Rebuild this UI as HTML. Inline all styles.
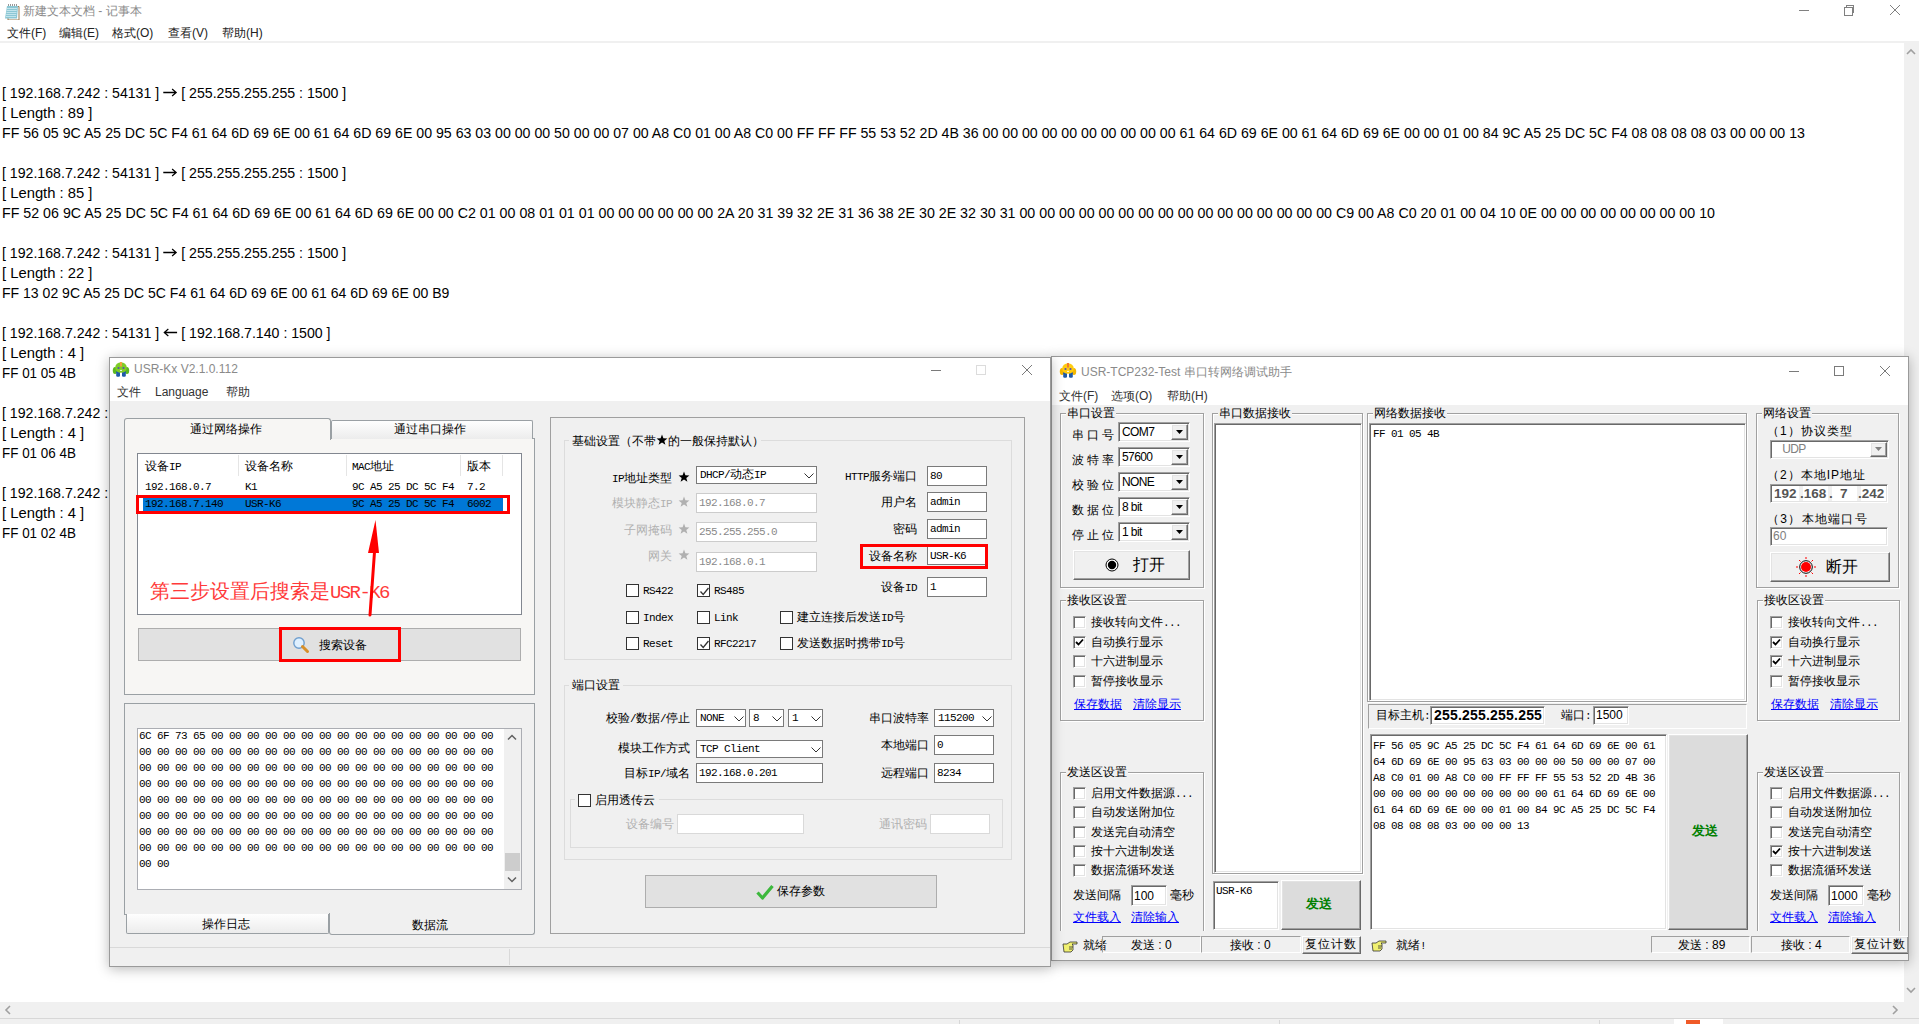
<!DOCTYPE html><html><head><meta charset="utf-8"><style>
*{margin:0;padding:0;box-sizing:border-box}
html,body{width:1919px;height:1024px;overflow:hidden;background:#fff}
body{position:relative;font-family:"Liberation Sans",sans-serif;color:#000}
div{position:absolute}
.t{white-space:pre;font-size:12px;line-height:14px}
.s{white-space:pre;font-family:"Liberation Mono",monospace;font-size:12px;line-height:14px}
.a{font-size:11px;letter-spacing:-0.6px}
.star{display:inline-block;vertical-align:-1px}
.arr{display:inline-block;vertical-align:1px}
.np{white-space:pre;font-size:15px;line-height:20px;left:3px}

.kxb{background:#fff;border:1px solid #7a7a7a}
.tb{border:1px solid #7a7a7a;background:#fff}
.tbd{border:1px solid #cccccc;background:#fff}
.cb{width:13px;height:13px;border:1px solid #333;background:#fff}
.gb{border:1px solid #dcdcdc}
.gray{color:#a0a0a0}

.sunk{background:#fff;border:1px solid;border-color:#a0a0a0 #fff #fff #a0a0a0;box-shadow:inset 1px 1px 0 #696969,inset -1px -1px 0 #e3e3e3}
.raise{background:#f0f0f0;border:1px solid;border-color:#fff #696969 #696969 #fff;box-shadow:inset -1px -1px 0 #a0a0a0,inset 1px 1px 0 #e3e3e3}
.etch{border:1px solid #a0a0a0;box-shadow:inset 1px 1px 0 #fff,1px 1px 0 #fff}
.thin{border:1px solid;border-color:#a0a0a0 #fff #fff #a0a0a0}
.lnk{color:#0000ff;text-decoration:underline}
</style></head><body><div style="left:0;top:0;width:1919px;height:1024px;background:#fff"></div>
<svg style="position:absolute;left:2px;top:2px" width="18" height="18" viewBox="0 0 18 18"><path d="M6 4.5H17V18H6Z" fill="#fff" stroke="#9a7a50" stroke-width="1"/><path d="M5 4L16 4L15 16.5L3 16.5Z" fill="#8cc7d4"/><path d="M5 6.5h10M4.7 8.5h10M4.5 10.5h10M4.2 12.5h10M4 14.5h10" stroke="#c8e8ee" stroke-width="0.9"/><path d="M6 3h9" stroke="#333" stroke-width="1.2" stroke-dasharray="1 1"/></svg>
<div class="t" style="left:23px;top:4px;color:#8a8a8a;font-size:12px">新建文本文档 - 记事本</div>
<div style="left:1799px;top:10px;width:10px;height:1px;background:#808080"></div>
<div style="left:1846px;top:5px;width:8px;height:8px;border:1px solid #808080"></div>
<div style="left:1844px;top:7px;width:9px;height:9px;border:1px solid #808080;background:#fff"></div>
<svg style="position:absolute;left:1889px;top:4px" width="12" height="12"><path d="M1 1L11 11M11 1L1 11" stroke="#808080" stroke-width="1"/></svg>
<div class="t" style="left:7px;top:26px;color:#222;font-size:12px">文件(F)</div>
<div class="t" style="left:59px;top:26px;color:#222;font-size:12px">编辑(E)</div>
<div class="t" style="left:112px;top:26px;color:#222;font-size:12px">格式(O)</div>
<div class="t" style="left:168px;top:26px;color:#222;font-size:12px">查看(V)</div>
<div class="t" style="left:222px;top:26px;color:#222;font-size:12px">帮助(H)</div>
<div style="left:0px;top:41px;width:1919px;height:2px;background:#f0f0f0"></div>
<div class="np" style="top:83px;left:2px;transform:scaleX(0.9424);transform-origin:0 0">[ 192.168.7.242 : 54131 ] <svg class="arr" width="15" height="9" viewBox="0 0 15 9"><path d="M0 4.5H13.5M9.5 1L13.8 4.5L9.5 8" stroke="#000" stroke-width="1.3" fill="none"/></svg> [ 255.255.255.255 : 1500 ]</div>
<div class="np" style="top:103px;left:2px;transform:scaleX(0.986);transform-origin:0 0">[ Length : 89 ]</div>
<div class="np" style="top:123px;left:2px;transform:scaleX(0.9445);transform-origin:0 0">FF 56 05 9C A5 25 DC 5C F4 61 64 6D 69 6E 00 61 64 6D 69 6E 00 95 63 03 00 00 00 50 00 00 07 00 A8 C0 01 00 A8 C0 00 FF FF FF 55 53 52 2D 4B 36 00 00 00 00 00 00 00 00 00 00 61 64 6D 69 6E 00 61 64 6D 69 6E 00 00 01 00 84 9C A5 25 DC 5C F4 08 08 08 08 03 00 00 00 13</div>
<div class="np" style="top:163px;left:2px;transform:scaleX(0.9424);transform-origin:0 0">[ 192.168.7.242 : 54131 ] <svg class="arr" width="15" height="9" viewBox="0 0 15 9"><path d="M0 4.5H13.5M9.5 1L13.8 4.5L9.5 8" stroke="#000" stroke-width="1.3" fill="none"/></svg> [ 255.255.255.255 : 1500 ]</div>
<div class="np" style="top:183px;left:2px;transform:scaleX(0.986);transform-origin:0 0">[ Length : 85 ]</div>
<div class="np" style="top:203px;left:2px;transform:scaleX(0.9487);transform-origin:0 0">FF 52 06 9C A5 25 DC 5C F4 61 64 6D 69 6E 00 61 64 6D 69 6E 00 00 C2 01 00 08 01 01 01 00 00 00 00 00 00 2A 20 31 39 32 2E 31 36 38 2E 30 2E 32 30 31 00 00 00 00 00 00 00 00 00 00 00 00 00 00 00 00 C9 00 A8 C0 20 01 00 04 10 0E 00 00 00 00 00 00 00 00 10</div>
<div class="np" style="top:243px;left:2px;transform:scaleX(0.9424);transform-origin:0 0">[ 192.168.7.242 : 54131 ] <svg class="arr" width="15" height="9" viewBox="0 0 15 9"><path d="M0 4.5H13.5M9.5 1L13.8 4.5L9.5 8" stroke="#000" stroke-width="1.3" fill="none"/></svg> [ 255.255.255.255 : 1500 ]</div>
<div class="np" style="top:263px;left:2px;transform:scaleX(0.986);transform-origin:0 0">[ Length : 22 ]</div>
<div class="np" style="top:283px;left:2px;transform:scaleX(0.9363);transform-origin:0 0">FF 13 02 9C A5 25 DC 5C F4 61 64 6D 69 6E 00 61 64 6D 69 6E 00 B9</div>
<div class="np" style="top:323px;left:2px;transform:scaleX(0.9424);transform-origin:0 0">[ 192.168.7.242 : 54131 ] <svg class="arr" width="15" height="9" viewBox="0 0 15 9"><path d="M15 4.5H1.5M5.5 1L1.2 4.5L5.5 8" stroke="#000" stroke-width="1.3" fill="none"/></svg> [ 192.168.7.140 : 1500 ]</div>
<div class="np" style="top:343px;left:2px;transform:scaleX(0.986);transform-origin:0 0">[ Length : 4 ]</div>
<div class="np" style="top:363px;left:2px;transform:scaleX(0.895);transform-origin:0 0">FF 01 05 4B</div>
<div class="np" style="top:403px;left:2px;transform:scaleX(0.9424);transform-origin:0 0">[ 192.168.7.242 : 54131 ] <svg class="arr" width="15" height="9" viewBox="0 0 15 9"><path d="M15 4.5H1.5M5.5 1L1.2 4.5L5.5 8" stroke="#000" stroke-width="1.3" fill="none"/></svg> [ 192.168.7.140 : 1500 ]</div>
<div class="np" style="top:423px;left:2px;transform:scaleX(0.986);transform-origin:0 0">[ Length : 4 ]</div>
<div class="np" style="top:443px;left:2px;transform:scaleX(0.895);transform-origin:0 0">FF 01 06 4B</div>
<div class="np" style="top:483px;left:2px;transform:scaleX(0.9424);transform-origin:0 0">[ 192.168.7.242 : 54131 ] <svg class="arr" width="15" height="9" viewBox="0 0 15 9"><path d="M15 4.5H1.5M5.5 1L1.2 4.5L5.5 8" stroke="#000" stroke-width="1.3" fill="none"/></svg> [ 192.168.7.140 : 1500 ]</div>
<div class="np" style="top:503px;left:2px;transform:scaleX(0.986);transform-origin:0 0">[ Length : 4 ]</div>
<div class="np" style="top:523px;left:2px;transform:scaleX(0.895);transform-origin:0 0">FF 01 02 4B</div>
<div style="left:1904px;top:43px;width:15px;height:959px;background:#f0f0f0"></div>
<svg style="position:absolute;left:1906px;top:48px" width="10" height="8"><path d="M1 6L5 2L9 6" stroke="#a0a0a0" stroke-width="1.6" fill="none"/></svg>
<svg style="position:absolute;left:1906px;top:986px" width="10" height="8"><path d="M1 2L5 6L9 2" stroke="#a0a0a0" stroke-width="1.6" fill="none"/></svg>
<div style="left:0px;top:1002px;width:1903px;height:16px;background:#f0f0f0"></div>
<svg style="position:absolute;left:4px;top:1005px" width="8" height="10"><path d="M6 1L2 5L6 9" stroke="#a0a0a0" stroke-width="1.6" fill="none"/></svg>
<svg style="position:absolute;left:1891px;top:1005px" width="8" height="10"><path d="M2 1L6 5L2 9" stroke="#a0a0a0" stroke-width="1.6" fill="none"/></svg>
<div style="left:1903px;top:1002px;width:16px;height:16px;background:#f0f0f0"></div>
<div style="left:0px;top:1018px;width:1919px;height:1px;background:#d7d7d7"></div>
<div style="left:0px;top:1019px;width:1919px;height:5px;background:#f0f0f0"></div>
<div style="left:959px;top:1020px;width:1px;height:4px;background:#d7d7d7"></div>
<div style="left:1279px;top:1020px;width:1px;height:4px;background:#d7d7d7"></div>
<div style="left:1599px;top:1020px;width:1px;height:4px;background:#d7d7d7"></div>
<div style="left:1674px;top:1019px;width:49px;height:5px;background:#fff"></div>
<div style="left:1686px;top:1020px;width:14px;height:4px;background:#f05a28"></div>
<div style="left:1051px;top:356px;width:858px;height:605px;background:#f0f0f0;border:1px solid #9a9a9a;box-shadow:0 2px 12px rgba(0,0,0,0.28)"></div>
<div style="left:1052px;top:357px;width:856px;height:48px;background:#fff"></div>
<svg style="position:absolute;left:1057px;top:359px" width="22" height="22" viewBox="0 0 22 22"><ellipse cx="5" cy="12.5" rx="2.2" ry="3.6" fill="#f5b800"/><ellipse cx="17" cy="12.5" rx="2.2" ry="3.6" fill="#f5b800"/><rect x="6.2" y="13" width="3.8" height="5.8" rx="1.2" fill="#1f5aa8"/><rect x="12" y="13" width="3.8" height="5.8" rx="1.2" fill="#1f5aa8"/><rect x="10" y="14.5" width="2" height="3.5" fill="#fff"/><ellipse cx="11" cy="9.5" rx="5.8" ry="5.3" fill="#ffcc10"/><rect x="10" y="4" width="2" height="4.5" fill="#f07a30"/><circle cx="8.5" cy="10" r="1.1" fill="#5a4fb0"/><circle cx="13.5" cy="10" r="1.1" fill="#5a4fb0"/><ellipse cx="11" cy="12.3" rx="1.1" ry="0.6" fill="#fff"/></svg>
<div class="t" style="left:1081px;top:365px;color:#8a8a8a;font-size:12px">USR-TCP232-Test 串口转网络调试助手</div>
<div style="left:1789px;top:371px;width:10px;height:1px;background:#7a7a7a"></div>
<div style="left:1834px;top:366px;width:10px;height:10px;border:1px solid #7a7a7a"></div>
<svg style="position:absolute;left:1879px;top:365px" width="12" height="12"><path d="M1 1L11 11M11 1L1 11" stroke="#7a7a7a" stroke-width="1"/></svg>
<div class="t" style="left:1059px;top:389px;color:#333;font-size:12px">文件(F)</div>
<div class="t" style="left:1111px;top:389px;color:#333;font-size:12px">选项(O)</div>
<div class="t" style="left:1167px;top:389px;color:#333;font-size:12px">帮助(H)</div>
<div class="etch" style="left:1060px;top:413px;width:144px;height:175px;"></div>
<div style="left:1066px;top:407px;width:50px;height:13px;background:#f0f0f0"></div>
<div class="s" style="left:1067px;top:407px;">串口设置</div>
<div class="s" style="left:1072px;top:429px;letter-spacing:3px">串口号</div>
<div class="sunk" style="left:1118px;top:422px;width:72px;height:20px;"></div>
<div class="raise" style="left:1171px;top:424px;width:17px;height:16px;"><svg style="position:absolute;left:4px;top:5px" width="7" height="4"><path d="M0 0H7L3.5 4Z" fill="#000"/></svg></div>
<div class="t" style="left:1122px;top:425px;color:#000;font-size:12px;letter-spacing:-0.6px">COM7</div>
<div class="s" style="left:1072px;top:454px;letter-spacing:3px">波特率</div>
<div class="sunk" style="left:1118px;top:447px;width:72px;height:20px;"></div>
<div class="raise" style="left:1171px;top:449px;width:17px;height:16px;"><svg style="position:absolute;left:4px;top:5px" width="7" height="4"><path d="M0 0H7L3.5 4Z" fill="#000"/></svg></div>
<div class="t" style="left:1122px;top:450px;color:#000;font-size:12px;letter-spacing:-0.6px">57600</div>
<div class="s" style="left:1072px;top:479px;letter-spacing:3px">校验位</div>
<div class="sunk" style="left:1118px;top:472px;width:72px;height:20px;"></div>
<div class="raise" style="left:1171px;top:474px;width:17px;height:16px;"><svg style="position:absolute;left:4px;top:5px" width="7" height="4"><path d="M0 0H7L3.5 4Z" fill="#000"/></svg></div>
<div class="t" style="left:1122px;top:475px;color:#000;font-size:12px;letter-spacing:-0.6px">NONE</div>
<div class="s" style="left:1072px;top:504px;letter-spacing:3px">数据位</div>
<div class="sunk" style="left:1118px;top:497px;width:72px;height:20px;"></div>
<div class="raise" style="left:1171px;top:499px;width:17px;height:16px;"><svg style="position:absolute;left:4px;top:5px" width="7" height="4"><path d="M0 0H7L3.5 4Z" fill="#000"/></svg></div>
<div class="t" style="left:1122px;top:500px;color:#000;font-size:12px;letter-spacing:-0.6px">8 bit</div>
<div class="s" style="left:1072px;top:529px;letter-spacing:3px">停止位</div>
<div class="sunk" style="left:1118px;top:522px;width:72px;height:20px;"></div>
<div class="raise" style="left:1171px;top:524px;width:17px;height:16px;"><svg style="position:absolute;left:4px;top:5px" width="7" height="4"><path d="M0 0H7L3.5 4Z" fill="#000"/></svg></div>
<div class="t" style="left:1122px;top:525px;color:#000;font-size:12px;letter-spacing:-0.6px">1 bit</div>
<div class="raise" style="left:1073px;top:550px;width:117px;height:30px;"></div>
<svg style="position:absolute;left:1105px;top:558px" width="14" height="14"><circle cx="7" cy="7" r="6" fill="#fff" stroke="#000" stroke-width="1"/><circle cx="7" cy="7" r="4.2" fill="#000"/></svg>
<div class="t" style="left:1133px;top:556px;font-size:16px;line-height:18px">打开</div>
<div class="etch" style="left:1060px;top:600px;width:144px;height:121px;"></div>
<div style="left:1066px;top:594px;width:62px;height:13px;background:#f0f0f0"></div>
<div class="s" style="left:1067px;top:594px;">接收区设置</div>
<div class="sunk" style="left:1073px;top:616px;width:13px;height:13px;"></div>
<div class="s" style="left:1091px;top:616px;">接收转向文件<span class="a">...</span></div>
<div class="sunk" style="left:1073px;top:636px;width:13px;height:13px;"><svg style="position:absolute;left:1px;top:1px" width="9" height="9"><path d="M1 4L3.5 6.5L8 1.5" stroke="#000" stroke-width="1.8" fill="none"/></svg></div>
<div class="s" style="left:1091px;top:636px;">自动换行显示</div>
<div class="sunk" style="left:1073px;top:655px;width:13px;height:13px;"></div>
<div class="s" style="left:1091px;top:655px;">十六进制显示</div>
<div class="sunk" style="left:1073px;top:675px;width:13px;height:13px;"></div>
<div class="s" style="left:1091px;top:675px;">暂停接收显示</div>
<div class="s" style="left:1074px;top:698px;color:#0000ff;text-decoration:underline">保存数据</div>
<div class="s" style="left:1133px;top:698px;color:#0000ff;text-decoration:underline">清除显示</div>
<div class="etch" style="left:1060px;top:772px;width:144px;height:180px;"></div>
<div style="left:1066px;top:766px;width:62px;height:13px;background:#f0f0f0"></div>
<div class="s" style="left:1067px;top:766px;">发送区设置</div>
<div class="sunk" style="left:1073px;top:787px;width:13px;height:13px;"></div>
<div class="s" style="left:1091px;top:787px;">启用文件数据源<span class="a">...</span></div>
<div class="sunk" style="left:1073px;top:806px;width:13px;height:13px;"></div>
<div class="s" style="left:1091px;top:806px;">自动发送附加位</div>
<div class="sunk" style="left:1073px;top:826px;width:13px;height:13px;"></div>
<div class="s" style="left:1091px;top:826px;">发送完自动清空</div>
<div class="sunk" style="left:1073px;top:845px;width:13px;height:13px;"></div>
<div class="s" style="left:1091px;top:845px;">按十六进制发送</div>
<div class="sunk" style="left:1073px;top:864px;width:13px;height:13px;"></div>
<div class="s" style="left:1091px;top:864px;">数据流循环发送</div>
<div class="s" style="left:1073px;top:889px;">发送间隔</div>
<div class="sunk" style="left:1131px;top:885px;width:36px;height:21px;"></div>
<div class="t" style="left:1134px;top:889px;font-size:12px">100</div>
<div class="s" style="left:1170px;top:889px;">毫秒</div>
<div class="s" style="left:1073px;top:911px;color:#0000ff;text-decoration:underline">文件载入</div>
<div class="s" style="left:1131px;top:911px;color:#0000ff;text-decoration:underline">清除输入</div>
<div class="etch" style="left:1212px;top:413px;width:151px;height:461px;"></div>
<div style="left:1218px;top:407px;width:74px;height:13px;background:#f0f0f0"></div>
<div class="s" style="left:1219px;top:407px;">串口数据接收</div>
<div class="sunk" style="left:1214px;top:423px;width:148px;height:450px;"></div>
<div class="sunk" style="left:1213px;top:881px;width:66px;height:49px;"></div>
<div class="s" style="left:1216px;top:884px;"><span class="a">USR-K6</span></div>
<div class="raise" style="left:1281px;top:880px;width:80px;height:50px;background:#dcdcdc"></div>
<div class="t" style="left:1306px;top:897px;font-size:13px;font-weight:bold;color:#008000">发送</div>
<div class="etch" style="left:1367px;top:413px;width:380px;height:289px;"></div>
<div style="left:1373px;top:407px;width:74px;height:13px;background:#f0f0f0"></div>
<div class="s" style="left:1374px;top:407px;">网络数据接收</div>
<div class="sunk" style="left:1369px;top:423px;width:377px;height:278px;"></div>
<div class="s" style="left:1373px;top:427px;"><span class="a">FF 01 05 4B</span></div>
<div class="thin" style="left:1368px;top:704px;width:379px;height:25px;"></div>
<div class="s" style="left:1376px;top:709px;">目标主机<span class="a">:</span></div>
<div class="sunk" style="left:1430px;top:706px;width:115px;height:19px;"></div>
<div class="t" style="left:1434px;top:707px;font-size:14px;line-height:17px;font-weight:bold;letter-spacing:0.2px">255.255.255.255</div>
<div class="s" style="left:1561px;top:709px;">端口<span class="a">:</span></div>
<div class="sunk" style="left:1593px;top:706px;width:36px;height:19px;"></div>
<div class="t" style="left:1596px;top:708px;font-size:12px">1500</div>
<div class="sunk" style="left:1370px;top:734px;width:297px;height:196px;"></div>
<div class="s" style="left:1373px;top:738px;line-height:16px"><span class="a">FF 56 05 9C A5 25 DC 5C F4 61 64 6D 69 6E 00 61</span>
<span class="a">64 6D 69 6E 00 95 63 03 00 00 00 50 00 00 07 00</span>
<span class="a">A8 C0 01 00 A8 C0 00 FF FF FF 55 53 52 2D 4B 36</span>
<span class="a">00 00 00 00 00 00 00 00 00 00 61 64 6D 69 6E 00</span>
<span class="a">61 64 6D 69 6E 00 00 01 00 84 9C A5 25 DC 5C F4</span>
<span class="a">08 08 08 08 03 00 00 00 13</span></div>
<div class="raise" style="left:1668px;top:734px;width:80px;height:196px;background:#dcdcdc"></div>
<div class="t" style="left:1692px;top:824px;font-size:13px;font-weight:bold;color:#008000">发送</div>
<div class="etch" style="left:1756px;top:413px;width:143px;height:175px;"></div>
<div style="left:1762px;top:407px;width:50px;height:13px;background:#f0f0f0"></div>
<div class="s" style="left:1763px;top:407px;">网络设置</div>
<div class="t" style="left:1767px;top:424px;font-size:12px;letter-spacing:1px">（1）协议类型</div>
<div class="sunk" style="left:1770px;top:440px;width:119px;height:19px;"></div>
<div class="raise" style="left:1870px;top:442px;width:17px;height:15px;"><svg style="position:absolute;left:4px;top:4px" width="7" height="4"><path d="M0 0H7L3.5 4Z" fill="#808080"/></svg></div>
<div class="t" style="left:1774px;top:442px;color:#808080;font-size:12px;letter-spacing:-0.6px">   UDP</div>
<div class="t" style="left:1767px;top:468px;font-size:12px;letter-spacing:1px">（2）本地IP地址</div>
<div class="sunk" style="left:1770px;top:484px;width:118px;height:19px;"></div>
<div style="left:1799px;top:486px;width:4px;height:15px;background:#f0f0f0"></div>
<div style="left:1828px;top:486px;width:4px;height:15px;background:#f0f0f0"></div>
<div style="left:1857px;top:486px;width:4px;height:15px;background:#f0f0f0"></div>
<div class="t" style="left:1774px;top:486px;font-size:13.5px;line-height:16px;font-weight:bold;color:#555">192</div>
<div class="t" style="left:1800px;top:486px;font-size:13.5px;line-height:16px;font-weight:bold;color:#555">.168</div>
<div class="t" style="left:1829px;top:486px;font-size:13.5px;line-height:16px;font-weight:bold;color:#555">.</div>
<div class="t" style="left:1840px;top:486px;font-size:13.5px;line-height:16px;font-weight:bold;color:#555">7</div>
<div class="t" style="left:1858px;top:486px;font-size:13.5px;line-height:16px;font-weight:bold;color:#555">.242</div>
<div class="t" style="left:1767px;top:512px;font-size:12px;letter-spacing:1.3px">（3）本地端口号</div>
<div class="sunk" style="left:1770px;top:527px;width:118px;height:19px;"></div>
<div class="t" style="left:1773px;top:529px;font-size:12px;color:#808080">60</div>
<div class="raise" style="left:1770px;top:552px;width:120px;height:30px;"></div>
<svg style="position:absolute;left:1795px;top:556px" width="22" height="22" viewBox="0 0 22 22"><g stroke="#ff0000" stroke-width="1"><path d="M11 1v2M11 19v2M1 11h2M19 11h2M4 4l1.5 1.5M16.5 16.5L18 18M18 4l-1.5 1.5M5.5 16.5L4 18"/></g><circle cx="11" cy="11" r="6.3" fill="#fff" stroke="#000" stroke-width="1"/><circle cx="11" cy="11" r="5" fill="#ff0000"/></svg>
<div class="t" style="left:1826px;top:558px;font-size:16px;line-height:18px">断开</div>
<div class="etch" style="left:1757px;top:600px;width:143px;height:121px;"></div>
<div style="left:1763px;top:594px;width:62px;height:13px;background:#f0f0f0"></div>
<div class="s" style="left:1764px;top:594px;">接收区设置</div>
<div class="sunk" style="left:1770px;top:616px;width:13px;height:13px;"></div>
<div class="s" style="left:1788px;top:616px;">接收转向文件<span class="a">...</span></div>
<div class="sunk" style="left:1770px;top:636px;width:13px;height:13px;"><svg style="position:absolute;left:1px;top:1px" width="9" height="9"><path d="M1 4L3.5 6.5L8 1.5" stroke="#000" stroke-width="1.8" fill="none"/></svg></div>
<div class="s" style="left:1788px;top:636px;">自动换行显示</div>
<div class="sunk" style="left:1770px;top:655px;width:13px;height:13px;"><svg style="position:absolute;left:1px;top:1px" width="9" height="9"><path d="M1 4L3.5 6.5L8 1.5" stroke="#000" stroke-width="1.8" fill="none"/></svg></div>
<div class="s" style="left:1788px;top:655px;">十六进制显示</div>
<div class="sunk" style="left:1770px;top:675px;width:13px;height:13px;"></div>
<div class="s" style="left:1788px;top:675px;">暂停接收显示</div>
<div class="s" style="left:1771px;top:698px;color:#0000ff;text-decoration:underline">保存数据</div>
<div class="s" style="left:1830px;top:698px;color:#0000ff;text-decoration:underline">清除显示</div>
<div class="etch" style="left:1757px;top:772px;width:143px;height:180px;"></div>
<div style="left:1763px;top:766px;width:62px;height:13px;background:#f0f0f0"></div>
<div class="s" style="left:1764px;top:766px;">发送区设置</div>
<div class="sunk" style="left:1770px;top:787px;width:13px;height:13px;"></div>
<div class="s" style="left:1788px;top:787px;">启用文件数据源<span class="a">...</span></div>
<div class="sunk" style="left:1770px;top:806px;width:13px;height:13px;"></div>
<div class="s" style="left:1788px;top:806px;">自动发送附加位</div>
<div class="sunk" style="left:1770px;top:826px;width:13px;height:13px;"></div>
<div class="s" style="left:1788px;top:826px;">发送完自动清空</div>
<div class="sunk" style="left:1770px;top:845px;width:13px;height:13px;"><svg style="position:absolute;left:1px;top:1px" width="9" height="9"><path d="M1 4L3.5 6.5L8 1.5" stroke="#000" stroke-width="1.8" fill="none"/></svg></div>
<div class="s" style="left:1788px;top:845px;">按十六进制发送</div>
<div class="sunk" style="left:1770px;top:864px;width:13px;height:13px;"></div>
<div class="s" style="left:1788px;top:864px;">数据流循环发送</div>
<div class="s" style="left:1770px;top:889px;">发送间隔</div>
<div class="sunk" style="left:1828px;top:885px;width:36px;height:21px;"></div>
<div class="t" style="left:1831px;top:889px;font-size:12px">1000</div>
<div class="s" style="left:1867px;top:889px;">毫秒</div>
<div class="s" style="left:1770px;top:911px;color:#0000ff;text-decoration:underline">文件载入</div>
<div class="s" style="left:1828px;top:911px;color:#0000ff;text-decoration:underline">清除输入</div>
<div style="left:1052px;top:931px;width:856px;height:29px;background:#f0f0f0"></div>
<svg style="position:absolute;left:1062px;top:941px" width="16" height="12" viewBox="0 0 16 12"><path d="M1 3h4l3-2h7v2h-5l1 1v5l-2 2H2z" fill="#f0f070" stroke="#333" stroke-width="0.8"/><path d="M7 6h4M7 8h3" stroke="#333" stroke-width="0.8"/></svg>
<div class="s" style="left:1083px;top:939px;">就绪</div>
<div class="thin" style="left:1102px;top:936px;width:99px;height:17px;"></div>
<div class="t" style="left:1131px;top:938px;font-size:12px">发送 : 0</div>
<div class="thin" style="left:1201px;top:936px;width:100px;height:17px;"></div>
<div class="t" style="left:1230px;top:938px;font-size:12px">接收 : 0</div>
<div class="raise" style="left:1302px;top:936px;width:59px;height:18px;"></div>
<div class="s" style="left:1305px;top:938px;letter-spacing:1px">复位计数</div>
<svg style="position:absolute;left:1371px;top:940px" width="16" height="12" viewBox="0 0 16 12"><path d="M1 3h4l3-2h7v2h-5l1 1v5l-2 2H2z" fill="#f0f070" stroke="#333" stroke-width="0.8"/><path d="M7 6h4M7 8h3" stroke="#333" stroke-width="0.8"/></svg>
<div class="s" style="left:1396px;top:939px;">就绪<span class="a">!</span></div>
<div class="thin" style="left:1651px;top:936px;width:99px;height:17px;"></div>
<div class="t" style="left:1678px;top:938px;font-size:12px">发送 : 89</div>
<div class="thin" style="left:1751px;top:936px;width:99px;height:17px;"></div>
<div class="t" style="left:1781px;top:938px;font-size:12px">接收 : 4</div>
<div class="raise" style="left:1851px;top:936px;width:57px;height:18px;border-right:none"></div>
<div class="s" style="left:1854px;top:938px;letter-spacing:1px">复位计数</div>
<div style="left:109px;top:357px;width:942px;height:610px;background:#f0f0f0;border:1px solid #9a9a9a;box-shadow:0 2px 12px rgba(0,0,0,0.28)"></div>
<div style="left:110px;top:358px;width:940px;height:43px;background:#fff"></div>
<svg style="position:absolute;left:110px;top:358px" width="22" height="22" viewBox="0 0 22 22"><ellipse cx="5" cy="12.5" rx="2.2" ry="3.6" fill="#5cb81e"/><ellipse cx="17" cy="12.5" rx="2.2" ry="3.6" fill="#5cb81e"/><rect x="6.2" y="13" width="3.8" height="5.8" rx="1.2" fill="#1f5aa8"/><rect x="12" y="13" width="3.8" height="5.8" rx="1.2" fill="#1f5aa8"/><rect x="10" y="14.5" width="2" height="3.5" fill="#fff"/><ellipse cx="11" cy="9.5" rx="5.8" ry="5.3" fill="#7fcc26"/><rect x="10" y="4" width="2" height="4.5" fill="#f0a040"/><circle cx="8.5" cy="10" r="1.1" fill="#5a4fb0"/><circle cx="13.5" cy="10" r="1.1" fill="#5a4fb0"/><ellipse cx="11" cy="12.3" rx="1.1" ry="0.6" fill="#fff"/></svg>
<div class="t" style="left:134px;top:362px;color:#8a8a8a;font-size:12px">USR-Kx V2.1.0.112</div>
<div style="left:931px;top:370px;width:10px;height:1px;background:#7a7a7a"></div>
<div style="left:976px;top:365px;width:10px;height:10px;border:1px solid #dcdcdc"></div>
<svg style="position:absolute;left:1021px;top:364px" width="12" height="12"><path d="M1 1L11 11M11 1L1 11" stroke="#7a7a7a" stroke-width="1"/></svg>
<div class="t" style="left:117px;top:385px;color:#333;font-size:12px">文件</div>
<div class="t" style="left:155px;top:385px;color:#333;font-size:12px">Language</div>
<div class="t" style="left:226px;top:385px;color:#333;font-size:12px">帮助</div>
<div style="left:124px;top:438px;width:411px;height:257px;background:#f7f6f4;border:1px solid #9aa0a4"></div>
<div style="left:331px;top:420px;width:202px;height:19px;background:linear-gradient(#fefefe,#ececec);border:1px solid #9aa0a4;border-bottom:none;border-radius:2px 2px 0 0"></div>
<div style="left:124px;top:418px;width:207px;height:22px;background:#f7f6f4;border:1px solid #9aa0a4;border-bottom:none;border-radius:3px 3px 0 0"></div>
<div class="t" style="left:190px;top:422px;font-size:12px">通过网络操作</div>
<div class="t" style="left:394px;top:422px;font-size:12px">通过串口操作</div>
<div style="left:137px;top:453px;width:385px;height:162px;background:#fff;border:1px solid #828790"></div>
<div style="left:238px;top:455px;width:1px;height:21px;background:#e5e5e5"></div>
<div style="left:346px;top:455px;width:1px;height:21px;background:#e5e5e5"></div>
<div style="left:460px;top:455px;width:1px;height:21px;background:#e5e5e5"></div>
<div style="left:502px;top:455px;width:1px;height:21px;background:#e5e5e5"></div>
<div class="s" style="left:145px;top:460px;">设备<span class="a">IP</span></div>
<div class="s" style="left:245px;top:460px;">设备名称</div>
<div class="s" style="left:352px;top:460px;"><span class="a">MAC</span>地址</div>
<div class="s" style="left:467px;top:460px;">版本</div>
<div class="s" style="left:145px;top:480px;"><span class="a">192.168.0.7</span></div>
<div class="s" style="left:245px;top:480px;"><span class="a">K1</span></div>
<div class="s" style="left:352px;top:480px;"><span class="a">9C A5 25 DC 5C F4</span></div>
<div class="s" style="left:467px;top:480px;"><span class="a">7.2</span></div>
<div style="left:143px;top:497px;width:360px;height:14px;background:#0078d7"></div>
<div class="s" style="left:145px;top:497px;"><span class="a">192.168.7.140</span></div>
<div class="s" style="left:245px;top:497px;"><span class="a">USR-K6</span></div>
<div class="s" style="left:352px;top:497px;"><span class="a">9C A5 25 DC 5C F4</span></div>
<div class="s" style="left:467px;top:497px;"><span class="a">6002</span></div>
<div style="left:136px;top:495px;width:374px;height:19px;border:3px solid #ff0000"></div>
<div style="left:150px;top:580px;white-space:pre;font-family:'Liberation Serif',serif;font-size:20px;line-height:22px;color:#ff3a3a">第三步设置后搜索是<span style="font-family:'Liberation Mono';font-size:19px;letter-spacing:-1.6px">USR-K6</span></div>
<div style="left:138px;top:628px;width:383px;height:33px;background:#e1e1e1;border:1px solid #adadad"></div>
<svg style="position:absolute;left:292px;top:636px" width="18" height="18" viewBox="0 0 18 18"><circle cx="7" cy="7" r="5.2" fill="#dff0ff" stroke="#6f9fcf" stroke-width="1.4"/><path d="M10.5 10.5L15.5 15.5" stroke="#d8902a" stroke-width="3" stroke-linecap="round"/></svg>
<div class="s" style="left:319px;top:639px;">搜索设备</div>
<div style="left:279px;top:627px;width:122px;height:35px;border:3px solid #ff0000"></div>
<svg style="position:absolute;left:360px;top:515px" width="30" height="104" viewBox="0 0 30 104"><path d="M10 100 L15 30" stroke="#ff0000" stroke-width="3" stroke-linecap="round" fill="none"/><path d="M15.5 5 L19 38 L8 38 Z" fill="#ff0000"/></svg>
<div style="left:124px;top:703px;width:411px;height:212px;background:#f0f0f0;border:1px solid #9aa0a4"></div>
<div style="left:126px;top:914px;width:203px;height:20px;background:linear-gradient(#fefefe,#ececec);border:1px solid #9aa0a4;border-top:none;border-radius:0 0 2px 2px"></div>
<div style="left:329px;top:913px;width:206px;height:22px;background:#f0f0f0;border:1px solid #9aa0a4;border-top:none;border-radius:0 0 3px 3px"></div>
<div class="t" style="left:202px;top:917px;font-size:12px">操作日志</div>
<div class="t" style="left:412px;top:918px;font-size:12px">数据流</div>
<div style="left:137px;top:728px;width:385px;height:162px;background:#fff;border:1px solid #abadb3"></div>
<div class="s" style="left:139px;top:728px;line-height:16px"><span class="a">6C 6F 73 65 00 00 00 00 00 00 00 00 00 00 00 00 00 00 00 00</span>
<span class="a">00 00 00 00 00 00 00 00 00 00 00 00 00 00 00 00 00 00 00 00</span>
<span class="a">00 00 00 00 00 00 00 00 00 00 00 00 00 00 00 00 00 00 00 00</span>
<span class="a">00 00 00 00 00 00 00 00 00 00 00 00 00 00 00 00 00 00 00 00</span>
<span class="a">00 00 00 00 00 00 00 00 00 00 00 00 00 00 00 00 00 00 00 00</span>
<span class="a">00 00 00 00 00 00 00 00 00 00 00 00 00 00 00 00 00 00 00 00</span>
<span class="a">00 00 00 00 00 00 00 00 00 00 00 00 00 00 00 00 00 00 00 00</span>
<span class="a">00 00 00 00 00 00 00 00 00 00 00 00 00 00 00 00 00 00 00 00</span>
<span class="a">00 00</span></div>
<div style="left:504px;top:729px;width:17px;height:160px;background:#f0f0f0"></div>
<div style="left:505px;top:853px;width:15px;height:18px;background:#cdcdcd"></div>
<svg style="position:absolute;left:507px;top:734px" width="10" height="7"><path d="M1 5.5L5 1.5L9 5.5" stroke="#606060" stroke-width="1.5" fill="none"/></svg>
<svg style="position:absolute;left:507px;top:876px" width="10" height="7"><path d="M1 1.5L5 5.5L9 1.5" stroke="#606060" stroke-width="1.5" fill="none"/></svg>
<div style="left:110px;top:947px;width:940px;height:1px;background:#d9d9d9"></div>
<div style="left:509px;top:949px;width:1px;height:16px;background:#d9d9d9"></div>
<div style="left:550px;top:417px;width:475px;height:517px;border:1px solid #a0a0a0"></div>
<div style="left:564px;top:440px;width:448px;height:220px;border:1px solid #dcdcdc"></div>
<div style="left:569px;top:433px;width:192px;height:14px;background:#f0f0f0"></div>
<div class="s" style="left:572px;top:434px;">基础设置（不带<svg class="star" width="12" height="12" viewBox="0 0 12 12"><path d="M6 0.6L7.4 4.3L11.4 4.4L8.3 6.9L9.4 10.8L6 8.6L2.6 10.8L3.7 6.9L0.6 4.4L4.6 4.3Z" fill="currentColor"/></svg>的一般保持默认）</div>
<div class="s" style="right:1229px;top:471px;"><span class="a">IP</span>地址类型<span class="a"> </span><svg class="star" width="12" height="12" viewBox="0 0 12 12"><path d="M6 0.6L7.4 4.3L11.4 4.4L8.3 6.9L9.4 10.8L6 8.6L2.6 10.8L3.7 6.9L0.6 4.4L4.6 4.3Z" fill="currentColor"/></svg></div>
<div class="s" style="right:1229px;top:496px;color:#b0b0b0">模块静态<span class="a">IP </span><svg class="star" width="12" height="12" viewBox="0 0 12 12"><path d="M6 0.6L7.4 4.3L11.4 4.4L8.3 6.9L9.4 10.8L6 8.6L2.6 10.8L3.7 6.9L0.6 4.4L4.6 4.3Z" fill="currentColor"/></svg></div>
<div class="s" style="right:1229px;top:523px;color:#b0b0b0">子网掩码<span class="a"> </span><svg class="star" width="12" height="12" viewBox="0 0 12 12"><path d="M6 0.6L7.4 4.3L11.4 4.4L8.3 6.9L9.4 10.8L6 8.6L2.6 10.8L3.7 6.9L0.6 4.4L4.6 4.3Z" fill="currentColor"/></svg></div>
<div class="s" style="right:1229px;top:549px;color:#b0b0b0">网关<span class="a"> </span><svg class="star" width="12" height="12" viewBox="0 0 12 12"><path d="M6 0.6L7.4 4.3L11.4 4.4L8.3 6.9L9.4 10.8L6 8.6L2.6 10.8L3.7 6.9L0.6 4.4L4.6 4.3Z" fill="currentColor"/></svg></div>
<div style="left:696px;top:466px;width:121px;height:18px;background:#fff;border:1px solid #7a7a7a"><svg style="position:absolute;left:107px;top:6px" width="10" height="6"><path d="M0.5 0.5L5 5L9.5 0.5" stroke="#333" stroke-width="1" fill="none"/></svg></div>
<div class="s" style="left:700px;top:468px;"><span class="a">DHCP/</span>动态<span class="a">IP</span></div>
<div style="left:696px;top:493px;width:121px;height:20px;background:#fff;border:1px solid #cccccc"></div>
<div class="s" style="left:699px;top:496px;color:#8a8a8a"><span class="a">192.168.0.7</span></div>
<div style="left:696px;top:522px;width:121px;height:20px;background:#fff;border:1px solid #cccccc"></div>
<div class="s" style="left:699px;top:525px;color:#8a8a8a"><span class="a">255.255.255.0</span></div>
<div style="left:696px;top:552px;width:121px;height:20px;background:#fff;border:1px solid #cccccc"></div>
<div class="s" style="left:699px;top:555px;color:#8a8a8a"><span class="a">192.168.0.1</span></div>
<div class="s" style="right:1002px;top:470px;"><span class="a">HTTP</span>服务端口</div>
<div style="left:927px;top:466px;width:60px;height:20px;background:#fff;border:1px solid #7a7a7a"></div>
<div class="s" style="left:930px;top:469px;"><span class="a">80</span></div>
<div class="s" style="right:1002px;top:496px;">用户名</div>
<div style="left:927px;top:492px;width:60px;height:20px;background:#fff;border:1px solid #7a7a7a"></div>
<div class="s" style="left:930px;top:495px;"><span class="a">admin</span></div>
<div class="s" style="right:1002px;top:523px;">密码</div>
<div style="left:927px;top:519px;width:60px;height:20px;background:#fff;border:1px solid #7a7a7a"></div>
<div class="s" style="left:930px;top:522px;"><span class="a">admin</span></div>
<div class="s" style="right:1002px;top:550px;">设备名称</div>
<div style="left:927px;top:546px;width:60px;height:19px;background:#fff;border:1px solid #7a7a7a"></div>
<div class="s" style="left:930px;top:549px;"><span class="a">USR-K6</span></div>
<div class="s" style="right:1002px;top:581px;">设备<span class="a">ID</span></div>
<div style="left:927px;top:577px;width:60px;height:20px;background:#fff;border:1px solid #7a7a7a"></div>
<div class="s" style="left:930px;top:580px;"><span class="a">1</span></div>
<div style="left:860px;top:544px;width:128px;height:25px;border:3px solid #ff0000"></div>
<div style="left:626px;top:584px;width:13px;height:13px;border:1px solid #333;background:#fff"></div>
<div class="s" style="left:643px;top:584px;"><span class="a">RS422</span></div>
<div style="left:697px;top:584px;width:13px;height:13px;border:1px solid #333;background:#fff"><svg style="position:absolute;left:1px;top:1px" width="11" height="11"><path d="M1.5 5.5L4.2 8.5L9.5 2" stroke="#333" stroke-width="1.3" fill="none"/></svg></div>
<div class="s" style="left:714px;top:584px;"><span class="a">RS485</span></div>
<div style="left:626px;top:611px;width:13px;height:13px;border:1px solid #333;background:#fff"></div>
<div class="s" style="left:643px;top:611px;"><span class="a">Index</span></div>
<div style="left:697px;top:611px;width:13px;height:13px;border:1px solid #333;background:#fff"></div>
<div class="s" style="left:714px;top:611px;"><span class="a">Link</span></div>
<div style="left:780px;top:611px;width:13px;height:13px;border:1px solid #333;background:#fff"></div>
<div class="s" style="left:797px;top:611px;">建立连接后发送<span class="a">ID</span>号</div>
<div style="left:626px;top:637px;width:13px;height:13px;border:1px solid #333;background:#fff"></div>
<div class="s" style="left:643px;top:637px;"><span class="a">Reset</span></div>
<div style="left:697px;top:637px;width:13px;height:13px;border:1px solid #333;background:#fff"><svg style="position:absolute;left:1px;top:1px" width="11" height="11"><path d="M1.5 5.5L4.2 8.5L9.5 2" stroke="#333" stroke-width="1.3" fill="none"/></svg></div>
<div class="s" style="left:714px;top:637px;"><span class="a">RFC2217</span></div>
<div style="left:780px;top:637px;width:13px;height:13px;border:1px solid #333;background:#fff"></div>
<div class="s" style="left:797px;top:637px;">发送数据时携带<span class="a">ID</span>号</div>
<div style="left:564px;top:685px;width:448px;height:175px;border:1px solid #dcdcdc"></div>
<div style="left:569px;top:678px;width:54px;height:14px;background:#f0f0f0"></div>
<div class="s" style="left:572px;top:679px;">端口设置</div>
<div class="s" style="right:1229px;top:712px;">校验<span class="a">/</span>数据<span class="a">/</span>停止</div>
<div class="s" style="right:1229px;top:742px;">模块工作方式</div>
<div class="s" style="right:1229px;top:767px;">目标<span class="a">IP/</span>域名</div>
<div style="left:696px;top:709px;width:50px;height:18px;background:#fff;border:1px solid #7a7a7a"><svg style="position:absolute;left:37px;top:6px" width="10" height="6"><path d="M0.5 0.5L5 5L9.5 0.5" stroke="#333" stroke-width="1" fill="none"/></svg></div>
<div class="s" style="left:700px;top:711px;"><span class="a">NONE</span></div>
<div style="left:749px;top:709px;width:35px;height:18px;background:#fff;border:1px solid #7a7a7a"><svg style="position:absolute;left:22px;top:6px" width="10" height="6"><path d="M0.5 0.5L5 5L9.5 0.5" stroke="#333" stroke-width="1" fill="none"/></svg></div>
<div class="s" style="left:753px;top:711px;"><span class="a">8</span></div>
<div style="left:788px;top:709px;width:35px;height:18px;background:#fff;border:1px solid #7a7a7a"><svg style="position:absolute;left:22px;top:6px" width="10" height="6"><path d="M0.5 0.5L5 5L9.5 0.5" stroke="#333" stroke-width="1" fill="none"/></svg></div>
<div class="s" style="left:792px;top:711px;"><span class="a">1</span></div>
<div style="left:696px;top:740px;width:127px;height:18px;background:#fff;border:1px solid #7a7a7a"><svg style="position:absolute;left:114px;top:6px" width="10" height="6"><path d="M0.5 0.5L5 5L9.5 0.5" stroke="#333" stroke-width="1" fill="none"/></svg></div>
<div class="s" style="left:700px;top:742px;"><span class="a">TCP Client</span></div>
<div style="left:696px;top:763px;width:127px;height:20px;background:#fff;border:1px solid #7a7a7a"></div>
<div class="s" style="left:699px;top:766px;"><span class="a">192.168.0.201</span></div>
<div class="s" style="right:990px;top:712px;">串口波特率</div>
<div class="s" style="right:990px;top:739px;">本地端口</div>
<div class="s" style="right:990px;top:767px;">远程端口</div>
<div style="left:934px;top:709px;width:60px;height:18px;background:#fff;border:1px solid #7a7a7a"><svg style="position:absolute;left:47px;top:6px" width="10" height="6"><path d="M0.5 0.5L5 5L9.5 0.5" stroke="#333" stroke-width="1" fill="none"/></svg></div>
<div class="s" style="left:938px;top:711px;"><span class="a">115200</span></div>
<div style="left:934px;top:735px;width:60px;height:20px;background:#fff;border:1px solid #7a7a7a"></div>
<div class="s" style="left:937px;top:738px;"><span class="a">0</span></div>
<div style="left:934px;top:763px;width:60px;height:20px;background:#fff;border:1px solid #7a7a7a"></div>
<div class="s" style="left:937px;top:766px;"><span class="a">8234</span></div>
<div style="left:570px;top:799px;width:433px;height:49px;border:1px solid #dcdcdc"></div>
<div style="left:575px;top:792px;width:84px;height:16px;background:#f0f0f0"></div>
<div style="left:578px;top:794px;width:13px;height:13px;border:1px solid #333;background:#fff"></div>
<div class="s" style="left:595px;top:794px;">启用透传云</div>
<div class="s" style="right:1245px;top:818px;color:#b0b0b0">设备编号</div>
<div style="left:677px;top:814px;width:127px;height:20px;background:#fff;border:1px solid #d9d9d9"></div>
<div class="s" style="right:992px;top:818px;color:#b0b0b0">通讯密码</div>
<div style="left:930px;top:814px;width:60px;height:20px;background:#fff;border:1px solid #d9d9d9"></div>
<div style="left:645px;top:875px;width:292px;height:33px;background:#e1e1e1;border:1px solid #adadad"></div>
<svg style="position:absolute;left:756px;top:884px" width="18" height="16" viewBox="0 0 18 16"><path d="M1.5 8.5L6.5 14L16.5 2" stroke="#3cb83c" stroke-width="3.2" fill="none" stroke-linejoin="round"/></svg>
<div class="s" style="left:777px;top:885px;">保存参数</div></body></html>
